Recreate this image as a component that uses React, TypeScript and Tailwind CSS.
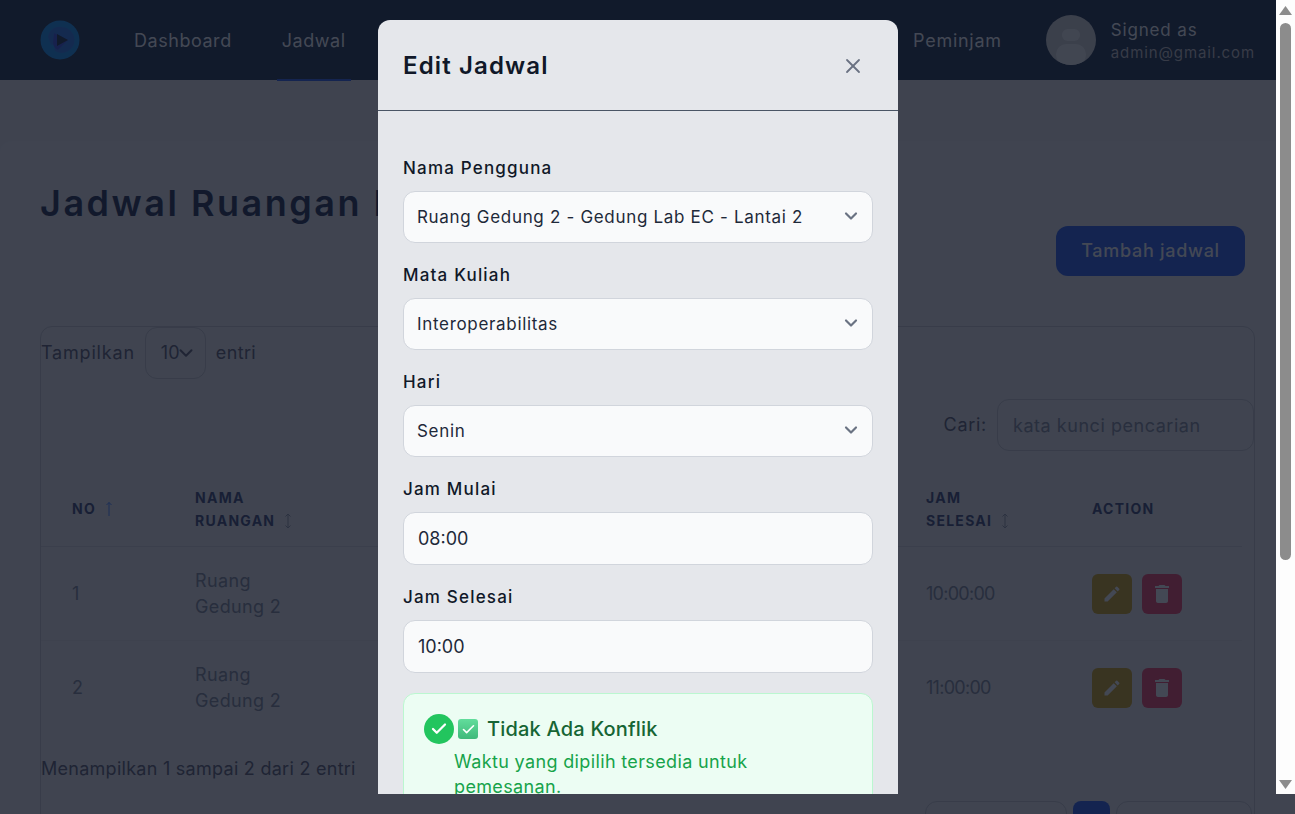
import React from "react";
import { Check, ChevronDown, X } from "lucide-react";
import { MdDelete, MdEdit } from "react-icons/md";

const SortIcon = ({ active = false }: { active?: boolean }) => (
  <svg
    viewBox="0 0 10 16"
    className={`inline-block w-[10px] h-4 ml-2 align-[-3px] ${active ? "text-[#3b6fe0]" : "text-[#7d7f8e]"}`}
    fill="none"
    stroke="currentColor"
    strokeWidth="1"
  >
    {active ? (
      <path d="M5 15V1.5M2.5 4 5 1.5 7.5 4" />
    ) : (
      <path d="M5 1v14M2.5 3.5 5 1l2.5 2.5M2.5 12.5 5 15l2.5-2.5" />
    )}
  </svg>
);

const Logo = () => (
  <svg viewBox="0 0 40 40" className="w-10 h-10">
    <circle cx="20" cy="20" r="19.5" fill="#0a7ad0" />
    <path d="M8 17C9 10 15 6 21 7a13 13 0 0 1 1 26c-3 0-6-1-8-3l2-6-5 1z" fill="#1f62c8" />
    <path d="M14 13 28 20 18 30c-3-1-5-4-5-8z" fill="#2a3fc0" />
    <path d="M17 14 28 20 17 26z" fill="#11203a" />
  </svg>
);

const SelectField = ({ label, value }: { label: string; value: string }) => (
  <div className="mb-5">
    <div className="mb-[11px] text-[17px] leading-6 font-medium text-gray-900 tracking-[0.07em]">{label}</div>
    <div className="relative">
      <select
        defaultValue={value}
        className="block w-full h-[52px] appearance-none rounded-xl border border-gray-300 bg-gray-50 pl-[13px] pr-8 pt-[2px] text-[17px] text-gray-800 tracking-[0.04em]"
      >
        <option>{value}</option>
      </select>
      <ChevronDown size={20} strokeWidth={2.6} className="absolute right-3 top-[15px] text-gray-500" />
    </div>
  </div>
);

const TimeField = ({ label, value }: { label: string; value: string }) => (
  <div className="mb-5">
    <div className="mb-[11px] text-[17px] leading-6 font-medium text-gray-900 tracking-[0.07em]">{label}</div>
    <input
      defaultValue={value}
      className="block w-full h-[53px] rounded-xl border border-gray-300 bg-gray-50 px-[14px] text-lg text-gray-800"
    />
  </div>
);

const ActionButtons = () => (
  <div className="flex gap-[10px]">
    <button className="w-10 h-10 rounded-md bg-[#b08610] text-[#d8d8dc] flex items-center justify-center">
      <MdEdit size={20} />
    </button>
    <button className="w-10 h-10 rounded-md bg-[#d03355] text-[#d8d8dc] flex items-center justify-center">
      <MdDelete size={24} />
    </button>
  </div>
);

const rows = [
  { no: 1, matkul: "Interoperabilitas", hari: "Senin", mulai: "08:00:00", selesai: "10:00:00" },
  { no: 2, matkul: "Interoperabilitas", hari: "Selasa", mulai: "09:00:00", selesai: "11:00:00" },
];

export default function App() {
  return (
    <div className="relative h-screen overflow-hidden bg-[#c6c4c8] font-[Inter,sans-serif]">
      {/* navbar */}
      <nav className="h-20 bg-[#112038] flex items-center pl-10 pr-10">
        <Logo />
        <div className="ml-[54px] pt-[2px] flex-1 flex items-center text-[#d8d8dc] text-lg tracking-[0.03em]">
          <a className="mr-[50px]">Dashboard</a>
          <a className="relative mr-auto">
            Jadwal
            <span className="absolute -left-[5px] -right-[5px] top-[52px] h-[2px] bg-[#1d48cc]"></span>
          </a>
          <a className="mr-6">Ruangan</a>
          <a className="mr-6">Gedung</a>
          <a className="ml-4 tracking-[0.04em]">Peminjam</a>
        </div>
        <div className="ml-[44px] w-[50px] h-[50px] rounded-full bg-[#b8b6b8] overflow-hidden flex flex-col items-center">
          <div className="mt-[14px] w-[18px] h-[18px] rounded-full bg-[#d0d0d0]"></div>
          <div className="mt-[3px] w-[30px] h-[30px] rounded-full bg-[#d0d0d0]"></div>
        </div>
        <div className="ml-[15px]">
          <div className="pt-px text-[17px] leading-6 text-[#d8d8dc] tracking-[0.05em]">Signed as</div>
          <div className="mt-[1px] text-[15px] leading-5 text-[#a8a4a8] tracking-[0.06em]">admin@gmail.com</div>
        </div>
      </nav>

      {/* konten */}
      <main className="mt-[61px] bg-[#c9c7cb] rounded-t-xl px-10 pt-[42px]">
        <div className="flex justify-between h-[93px]">
          <h1 className="text-4xl leading-10 font-semibold text-[#141d3c] tracking-[0.07em] whitespace-nowrap">Jadwal Ruangan Kuliah</h1>
          <button className="mt-[43px] mr-[10px] w-[189px] h-[50px] shrink-0 rounded-xl bg-[#1d48cc] text-[#d8d8dc] text-lg font-medium tracking-[0.04em]">
            Tambah jadwal
          </button>
        </div>

        <section className="mt-[50px] border border-[#aaa8ae] rounded-xl text-[#4b4a5c]">
          <div className="flex items-center text-lg">
            <span className="tracking-[0.045em]">Tampilkan</span>
            <div className="ml-[10px] w-[61px] h-[52px] rounded-xl border border-[#aaa8ae] flex items-center pl-[15px]">
              10<ChevronDown size={22} strokeWidth={2.2} className="-ml-[5px] text-[#4b4a5c]" />
            </div>
            <span className="ml-[10px] tracking-[0.02em]">entri</span>
          </div>
          <div className="mt-5 flex justify-end items-center">
            <span className="text-lg mr-[10px] tracking-[0.04em]">Cari:</span>
            <input
              placeholder="kata kunci pencarian"
              className="w-[257px] h-[52px] rounded-xl border border-[#aaa8ae] px-[15px] text-lg placeholder:text-[#6f7383] tracking-[0.03em]"
            />
          </div>

          <table className="mt-[19px] w-[1201px] table-fixed text-left border-collapse">
            <colgroup>
              <col className="w-[123px]" />
              <col className="w-[220px]" />
              <col className="w-[183px]" />
              <col className="w-[164px]" />
              <col className="w-[164px]" />
              <col className="w-[166px]" />
              <col className="w-[181px]" />
            </colgroup>
            <thead>
              <tr className="h-[76px] border-b border-[#b6b4ba] text-sm font-semibold text-[#2f3760] uppercase tracking-[0.09em] leading-[23px]">
                <th className="pl-[31px] pt-[2px]">No<SortIcon active /></th>
                <th className="pl-[31px] pt-[2px]"><span className="block">Nama</span>Ruangan<SortIcon /></th>
                <th className="pl-[31px] pt-[2px]">Mata Kuliah<SortIcon /></th>
                <th className="pl-[31px] pt-[2px]">Hari<SortIcon /></th>
                <th className="pl-[31px] pt-[2px]"><span className="block">Jam</span>Mulai<SortIcon /></th>
                <th className="pl-[31px] pt-[2px]"><span className="block">Jam</span>Selesai<SortIcon /></th>
                <th className="pl-[31px] pt-[2px]">Action</th>
              </tr>
            </thead>
            <tbody className="text-lg leading-[26px] text-[#6b6f80]">
              {rows.map((r) => (
                <tr key={r.no} className="h-[94px] border-b border-[#c1bfc4] last:border-b-0">
                  <td className="pl-[31px] pt-[2px]">{r.no}</td>
                  <td className="pl-[31px] pt-[2px] tracking-[0.02em]"><span className="block">Ruang</span>Gedung 2</td>
                  <td className="pl-[31px] pt-[2px]">{r.matkul}</td>
                  <td className="pl-[31px] pt-[2px]">{r.hari}</td>
                  <td className="pl-[31px] pt-[2px] tracking-[-0.04em]">{r.mulai}</td>
                  <td className="pl-[31px] pt-[2px] tracking-[-0.04em]">{r.selesai}</td>
                  <td className="pl-[31px] pt-[2px]"><ActionButtons /></td>
                </tr>
              ))}
            </tbody>
          </table>

          <div className="mt-[23px] text-lg leading-6 tracking-[0.015em]">Menampilkan 1 sampai 2 dari 2 entri</div>
          <div className="mt-5 flex justify-end gap-[6px] pr-[2px]">
            <div className="w-[142px] h-10 rounded-xl border border-[#aaa8ae]"></div>
            <div className="w-[37px] h-10 rounded-lg bg-[#1d48cc]"></div>
            <div className="w-[136px] h-10 rounded-xl border border-[#aaa8ae]"></div>
          </div>
        </section>
      </main>

      {/* backdrop */}
      <div className="fixed inset-0 bg-[#111827]/75"></div>

      {/* modal + scrollbar */}
      <div className="fixed top-0 inset-x-0 h-[794px] flex">
        <div className="flex-1 overflow-hidden pt-5">
          <div className="mx-auto w-[520px] rounded-t-xl bg-[#e5e7eb]">
            <div className="h-[91px] pt-[2px] border-b border-gray-600 flex items-center justify-between pl-[25px] pr-[33px]">
              <h2 className="text-2xl font-semibold text-gray-900 tracking-[0.047em]">Edit Jadwal</h2>
              <X size={24} strokeWidth={1.8} className="text-gray-500" />
            </div>
            <div className="px-[25px] pt-[45px]">
              <SelectField label="Nama Pengguna" value="Ruang Gedung 2 - Gedung Lab EC - Lantai 2" />
              <SelectField label="Mata Kuliah" value="Interoperabilitas" />
              <SelectField label="Hari" value="Senin" />
              <TimeField label="Jam Mulai" value="08:00" />
              <TimeField label="Jam Selesai" value="10:00" />
              <div className="h-[160px] rounded-xl border border-[#bbf7d0] bg-[#ecfdf3] pt-5 pl-5">
                <div className="flex items-center">
                  <div className="w-[30px] h-[30px] rounded-full bg-[#22c55e] flex items-center justify-center text-white">
                    <Check size={18} strokeWidth={3} />
                  </div>
                  <div className="ml-1 w-5 h-5 rounded-[3px] bg-gradient-to-b from-[#62dd9c] to-[#3fb97a] flex items-center justify-center text-white">
                    <Check size={15} strokeWidth={2.6} />
                  </div>
                  <span className="ml-[9px] text-xl font-medium text-[#166534] tracking-[0.01em]">Tidak Ada Konflik</span>
                </div>
                <div className="mt-[5px] ml-[30px] w-[330px] text-lg leading-[25px] text-[#16a34a] tracking-[0.02em]">
                  Waktu yang dipilih tersedia untuk pemesanan.
                </div>
              </div>
            </div>
          </div>
        </div>
        <div className="w-[19px] bg-[#fdfdfd] flex flex-col items-center pt-[6px]">
          <svg viewBox="0 0 13 9" className="w-[13px] h-[9px]"><path d="M6.5 0 13 9H0z" fill="#8c8c8c" /></svg>
          <div className="mt-2 w-[11px] h-[537px] rounded-full bg-[#8c8c8c]"></div>
          <svg viewBox="0 0 13 9" className="mt-auto mb-[5px] w-[13px] h-[9px]"><path d="M6.5 9 13 0H0z" fill="#8c8c8c" /></svg>
        </div>
      </div>
    </div>
  );
}
